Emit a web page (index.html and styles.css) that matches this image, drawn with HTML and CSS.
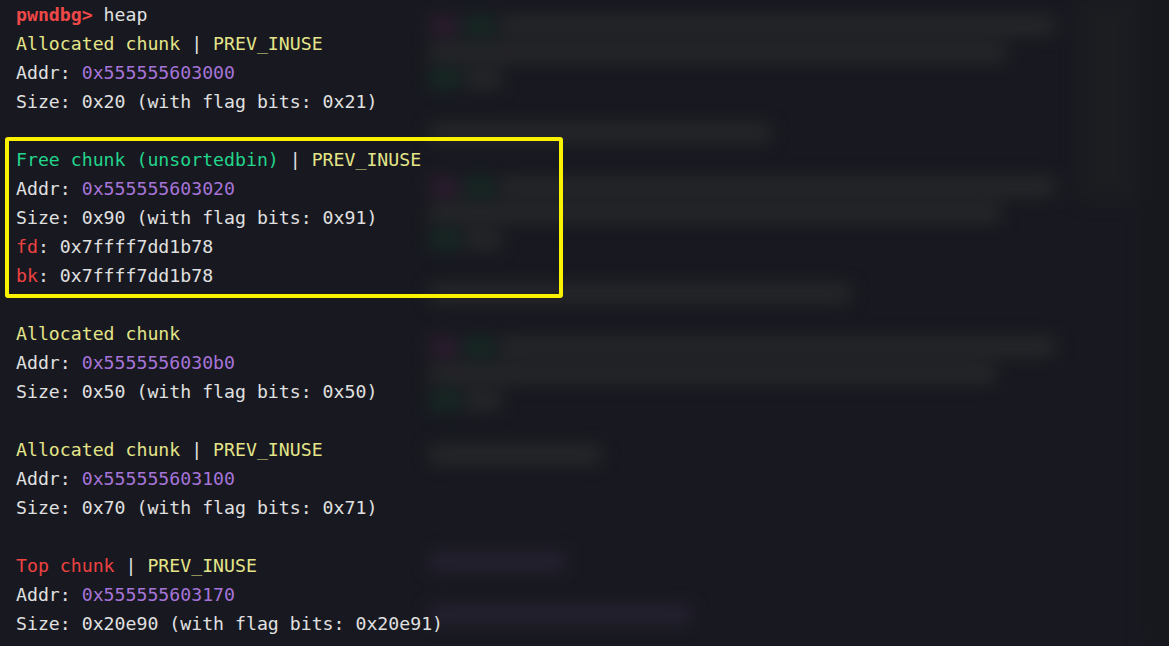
FILE: index.html
```html
<!DOCTYPE html>
<html>
<head>
<meta charset="utf-8">
<link rel="stylesheet" href="styles.css">
</head>
<body>
<div class="stage">
  <div class="bg">
    <div class="code-blur">
      <div class="row"><span class="b pink w28"></span><span class="b green w30"></span><span class="b gray w555"></span></div>
      <div class="row"><span class="b gray w575"></span></div>
      <div class="row"><span class="b green w30"></span><span class="b gray w35"></span></div>
      <div class="row"></div>
      <div class="row"><span class="b gray w340"></span></div>
      <div class="row"></div>
      <div class="row"><span class="b pink w28"></span><span class="b green w30"></span><span class="b gray w555"></span></div>
      <div class="row"><span class="b gray w570"></span></div>
      <div class="row"><span class="b green w30"></span><span class="b gray w35"></span></div>
      <div class="row"></div>
      <div class="row"><span class="b gray w420"></span></div>
      <div class="row"></div>
      <div class="row"><span class="b pink w28"></span><span class="b green w30"></span><span class="b gray w555"></span></div>
      <div class="row"><span class="b gray w565"></span></div>
      <div class="row"><span class="b green w30"></span><span class="b gray w35"></span></div>
      <div class="row"></div>
      <div class="row"><span class="b gray w170"></span></div>
      <div class="row"></div>
      <div class="row"></div>
      <div class="row"></div>
      <div class="row"><span class="b purple w135"></span></div>
      <div class="row"></div>
      <div class="row"><span class="b purple w260"></span></div>
    </div>
    <div class="minimap"></div>
    <div class="edge"></div>
  </div>
  <div class="term">
    <div class="line"><span class="prompt">pwndbg&gt;</span> heap</div>
    <div class="line"><span class="yel">Allocated chunk</span> | <span class="yel">PREV_INUSE</span></div>
    <div class="line">Addr: <span class="pur">0x555555603000</span></div>
    <div class="line">Size: 0x20 (with flag bits: 0x21)</div>
    <div class="line"></div>
    <div class="hl">
      <div class="line"><span class="grn">Free chunk (unsortedbin)</span> | <span class="yel">PREV_INUSE</span></div>
      <div class="line">Addr: <span class="pur">0x555555603020</span></div>
      <div class="line">Size: 0x90 (with flag bits: 0x91)</div>
      <div class="line"><span class="red">fd</span>: 0x7ffff7dd1b78</div>
      <div class="line"><span class="red">bk</span>: 0x7ffff7dd1b78</div>
    </div>
    <div class="line"></div>
    <div class="line"><span class="yel">Allocated chunk</span></div>
    <div class="line">Addr: <span class="pur">0x5555556030b0</span></div>
    <div class="line">Size: 0x50 (with flag bits: 0x50)</div>
    <div class="line"></div>
    <div class="line"><span class="yel">Allocated chunk</span> | <span class="yel">PREV_INUSE</span></div>
    <div class="line">Addr: <span class="pur">0x555555603100</span></div>
    <div class="line">Size: 0x70 (with flag bits: 0x71)</div>
    <div class="line"></div>
    <div class="line"><span class="red">Top chunk</span> | <span class="yel">PREV_INUSE</span></div>
    <div class="line">Addr: <span class="pur">0x555555603170</span></div>
    <div class="line">Size: 0x20e90 (with flag bits: 0x20e91)</div>
  </div>
</div>
</body>
</html>
```

FILE: styles.css
```css
html, body {
  margin: 0;
  padding: 0;
  background: #181920;
}

.stage {
  display: grid;
  width: 1169px;
  height: 646px;
  overflow: hidden;
  background: #181920;
}

.bg, .term {
  grid-area: 1 / 1;
}

.bg {
  display: flex;
  filter: blur(9px);
}

.code-blur {
  width: 630px;
  padding: 12px 0 0 430px;
  display: flex;
  flex-direction: column;
}

.row {
  height: 26.8px;
  display: flex;
  gap: 6px;
  align-items: center;
}

.b {
  height: 15px;
  border-radius: 3px;
}

.gray { background: #2a2b2c; }
.pink { background: #331d33; }
.green { background: #152e24; }
.purple { background: #2a2436; }

.w28 { width: 28px; }
.w30 { width: 30px; }
.w35 { width: 35px; }
.w135 { width: 135px; }
.w170 { width: 170px; }
.w260 { width: 260px; }
.w340 { width: 340px; }
.w420 { width: 420px; }
.w555 { width: 555px; }
.w565 { width: 565px; }
.w570 { width: 570px; }
.w575 { width: 575px; }

.minimap {
  width: 55px;
  margin-left: 20px;
  height: 200px;
  background: #1c1d21;
}

.edge {
  flex: 1;
  margin-left: 10px;
  background: #17181d;
}

.term {
  padding: 0 0 0 16px;
  font-family: "DejaVu Sans Mono", monospace;
  font-size: 18.2px;
  line-height: 29px;
  color: #e0e0e0;
  position: relative;
}

.line {
  height: 29px;
  white-space: pre;
}

.prompt {
  color: #f04848;
  font-weight: bold;
}

.yel { color: #e4e489; }
.grn { color: #22d68c; }
.pur { color: #a674d8; }
.red { color: #ee4242; }

.hl {
  width: 543px;
  margin: -8px 0 -7.5px -11px;
  padding: 4px 0 3.5px 7px;
  border: 4px solid #fbf200;
  border-radius: 3px;
}
```
